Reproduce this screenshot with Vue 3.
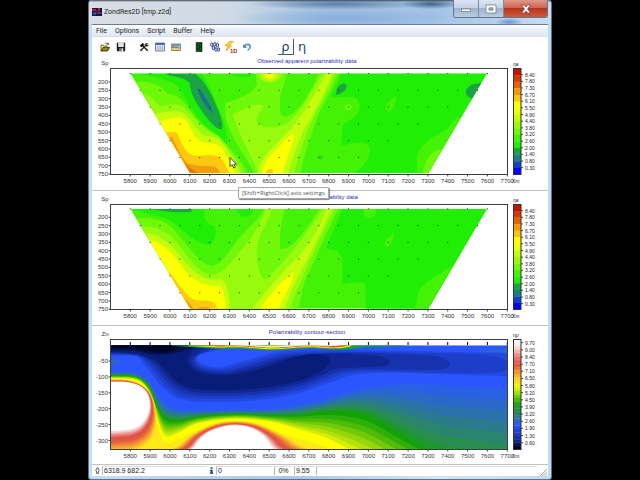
<script setup>
const X0 = 130.3
const STEP = 19.84
const xLabels = Array.from({ length: 20 }, (_, i) => ({ text: String(5800 + i * 100), x: X0 + i * STEP }))

/* ---------- curve helpers ---------- */
const mix = (a, b, t) => a + (b - a) * t
const mixPoints = (a, b, t) => a.map((p, i) => [mix(p[0], b[i][0], t), mix(p[1], b[i][1], t)])
const hex = (c) => [1, 3, 5].map((i) => parseInt(c.slice(i, i + 2), 16))
function ramp(stops, t) {
  const s = t * (stops.length - 1)
  const i = Math.min(Math.floor(s), stops.length - 2)
  const a = hex(stops[i])
  const b = hex(stops[i + 1])
  return `rgb(${a.map((v, k) => Math.round(mix(v, b[k], s - i))).join(',')})`
}
function curve(pts, closed) {
  const n = pts.length
  const at = (i) => (closed ? pts[(i + n) % n] : pts[Math.max(0, Math.min(n - 1, i))])
  let d = `M${pts[0].join(',')}`
  for (let i = 0; i < (closed ? n : n - 1); i++) {
    const [p, a, b, q] = [at(i - 1), at(i), at(i + 1), at(i + 2)]
    d += `C${a[0] + (b[0] - p[0]) / 6},${a[1] + (b[1] - p[1]) / 6} ${b[0] - (q[0] - a[0]) / 6},${b[1] - (q[1] - a[1]) / 6} ${b[0]},${b[1]}`
  }
  return d + (closed ? 'Z' : '')
}

/* ---------- pseudo-section palette ---------- */
const C = {
  blue: '#1c6f96', teal: '#1ba444', g2: '#20ee04', g3: '#44f206', g4: '#6ff808', g5: '#98fa0c',
  g6: '#c6fd0a', ye: '#ffff00', am: '#fdc810', or: '#f59c0c', dk: '#e2780f',
}

const observed = [
  [C.g3, 'M100,60H1220V380H100Z'],
  [C.g2, 'M768,71L755,105L738,135C745,150 790,136 810,144C830,152 828,180 812,198C790,222 770,212 772,240L768,290C790,280 840,272 853,290C860,320 840,345 808,371L1030,375L1215,71Z'],
  [C.g2, 'M150,71C200,76 230,85 258,96C290,108 300,150 328,188C352,222 385,252 424,284C434,262 420,220 405,185C388,140 370,100 350,71Z'],
  [C.g2, 'M440,71H505C495,85 455,86 440,71Z'],
  [C.g4, 'M150,96C200,92 225,104 248,132C285,130 305,168 330,200C352,228 378,240 402,258C440,300 474,335 490,375H300Z'],
  [C.g5, 'M178,132C205,140 212,162 228,168C260,160 290,160 300,176C330,200 350,238 400,260C440,305 462,335 478,375H300Z'],
  [C.g6, 'M205,192C245,186 270,178 296,190C322,212 340,252 364,258C395,258 412,272 430,305C452,335 460,350 466,375H300Z'],
  [C.ye, 'M225,216C250,204 285,196 302,210C320,240 334,274 362,280C395,275 412,292 424,318C440,345 446,360 454,375H300Z'],
  [C.am, 'M236,247H275C288,275 298,305 322,316C345,320 372,312 396,318C420,328 418,346 438,375H300Z'],
  [C.or, 'M246,262H262C276,290 290,330 312,342C340,350 370,346 388,350C402,356 402,364 408,375H300Z'],
  [C.dk, 'M284,326C298,336 308,352 330,362L346,375H300Z'],
  [C.g4, 'M422,158C450,150 500,136 515,104L512,71H602C606,98 585,120 585,150C582,185 588,202 606,200C650,180 680,120 700,71H760C742,112 722,150 702,190C682,240 668,290 655,330L645,375H512C490,330 455,290 432,235C420,205 420,180 422,158Z'],
  [C.g5, 'M444,194C480,172 520,156 536,168C528,188 512,195 515,215C530,238 580,238 612,215C650,180 682,120 712,71H750C732,120 700,170 682,210C660,260 642,310 626,375H520C505,320 462,262 444,194Z'],
  [C.g5, 'M520,71H592C586,106 524,108 520,71Z'],
  [C.g6, 'M528,71H582C578,98 532,100 528,71Z'],
  [C.ye, 'M537,71H570C566,90 540,90 537,71Z'],
  [C.g6, 'M520,375C518,330 558,298 600,252C640,222 690,130 724,71H742C715,140 680,200 656,240C640,280 620,330 608,375Z'],
  [C.ye, 'M532,375C532,345 548,318 578,296C600,270 615,250 627,252C625,290 600,330 592,375Z'],
  [C.am, 'M540,375C542,362 556,352 562,358C566,366 562,370 562,375Z'],
  [C.g4, 'M778,172C780,162 796,160 800,170C800,182 782,186 778,172Z'],
  [C.g3, 'M903,178C898,160 915,158 931,136C936,158 924,182 910,186Z'],
  [C.g3, 'M1125,203C1105,200 1100,228 1088,236C1060,256 1032,262 1010,292C985,318 1000,340 994,375H1030L1140,203Z'],
  [C.g4, 'M1062,298C1040,306 1016,330 1014,375H1030L1070,298Z'],
  [C.teal, 'M240,71H332C350,88 368,108 385,146C400,182 417,215 411,238C396,242 368,208 350,182C325,145 318,130 314,98C290,76 260,82 240,71Z'],
  [C.blue, 'M335,110C352,125 378,165 384,190C364,176 344,142 335,110Z'],
  [C.teal, 'M752,135L757,115C765,98 785,96 785,108C782,124 768,132 752,135Z'],
  [C.teal, 'M1142,125C1145,106 1170,97 1192,100L1162,148C1150,140 1142,135 1142,125Z'],
  [C.teal, 'M700,322C702,312 714,314 714,322C712,332 702,330 700,322Z', 0.35],
]

const calculated = [
  [C.g3, 'M100,60H1220V380H100Z'],
  [C.g2, 'M772,71L722,190C755,190 770,202 772,230V297C790,292 830,288 838,294C844,310 840,345 842,375H1030L1215,71Z'],
  [C.g2, 'M145,71C190,92 245,90 272,118C310,150 350,184 378,178C394,160 396,130 388,122C362,116 350,92 362,71Z'],
  [C.g2, 'M452,71H505C500,100 466,104 452,71Z'],
  [C.g4, 'M145,100C190,96 230,98 262,128C318,190 345,236 380,242C412,238 430,196 470,150C500,115 528,100 536,71H600C588,112 582,160 586,190C622,200 680,110 702,71H760C720,150 690,220 672,262C652,290 650,330 640,375H300Z'],
  [C.g5, 'M168,124C215,118 258,146 286,184C322,234 350,270 385,268C424,258 446,220 478,182C508,150 528,110 545,71H562C550,110 515,150 515,200C515,250 532,290 545,280C600,230 670,140 714,71H748C710,150 672,230 652,280C632,320 622,345 614,375H300Z'],
  [C.g6, 'M182,142C228,146 268,184 298,226C328,268 368,288 398,282C424,272 432,320 436,375H300Z'],
  [C.ye, 'M194,163C235,172 266,206 296,250C326,288 365,304 404,302C420,312 418,348 426,375H300Z'],
  [C.g6, 'M498,375C540,320 600,250 640,215C672,180 702,130 726,71H738C700,160 662,230 642,270C622,310 608,340 600,375Z'],
  [C.ye, 'M524,375C550,330 590,290 626,258C628,292 594,330 580,375Z'],
  [C.am, 'M240,248C272,276 296,330 330,344C360,350 394,336 397,375H300Z'],
  [C.or, 'M268,290C284,318 296,340 310,350L330,375H300ZM326,375C340,362 378,362 380,375Z'],
  [C.g3, 'M835,71H872C880,106 832,108 835,71Z'],
  [C.g3, 'M900,180C896,160 912,160 926,142C928,158 918,184 906,186Z'],
  [C.g3, 'M1100,243C1060,270 1006,292 998,330L990,375H1030L1120,243Z'],
  [C.teal, 'M190,71C240,77 270,84 320,80V71Z'],
]

/* ---------- inversion section ---------- */
const xs = [77, 140, 172, 196, 214, 240, 285, 340, 450, 560, 640, 720, 790, 855, 955, 1050, 1150, 1267]
const lineA = [156, 158, 170, 190, 220, 252, 268, 270, 270, 266, 256, 238, 215, 202, 192, 195, 200, 205]
const lineB = [167, 168, 180, 208, 252, 292, 300, 290, 282, 286, 284, 274, 274, 288, 344, 396, 420, 440]
const lineC = [175, 177, 190, 224, 284, 348, 336, 310, 296, 306, 328, 352, 386, 420, 470, 490, 500, 520]
const line = (ys) => xs.map((x, i) => [x, ys[i]])
function bands(a, b, stops, steps) {
  return Array.from({ length: steps }, (_, i) => {
    const t = i / steps
    return [ramp(stops, t), curve(mixPoints(line(a), line(b), t), false) + 'V400H77Z']
  })
}
function rings(outer, inner, stops, steps) {
  return Array.from({ length: steps + 1 }, (_, i) => [
    ramp(stops, i / steps),
    curve(mixPoints(outer, inner, i / steps), true),
  ])
}
const navyOuter = [[60, 60], [60, 104], [150, 108], [184, 142], [240, 208], [310, 242], [500, 242], [640, 220], [740, 186], [880, 158], [1400, 168], [1400, 108], [1075, 95], [900, 92], [620, 92], [480, 122], [400, 142], [342, 126], [350, 98], [420, 84], [440, 60]]
const navyInner = [[60, 60], [60, 92], [160, 102], [225, 132], [272, 182], [340, 208], [500, 207], [640, 182], [700, 158], [722, 142], [735, 127], [732, 114], [715, 104], [660, 104], [600, 120], [540, 142], [440, 165], [345, 158], [308, 128], [320, 98], [345, 60]]
const blobLeftOut = [[20, 178], [77, 178], [124, 180], [168, 194], [198, 224], [212, 266], [214, 316], [198, 362], [150, 396], [77, 402], [20, 402]]
const blobLeftIn = [[20, 186], [77, 186], [124, 187], [160, 196], [184, 216], [194, 246], [190, 280], [170, 312], [138, 328], [77, 334], [20, 334]]
const blobMidOut = [[235, 424], [282, 374], [325, 340], [385, 312], [450, 303], [520, 312], [585, 340], [640, 370], [700, 424]]
const blobMidIn = [[312, 424], [332, 374], [362, 342], [405, 323], [450, 316], [495, 323], [530, 342], [556, 374], [576, 424]]
const hot = ['#ffe818', '#fbb82c', '#f08a34', '#e25c40', '#df5248', '#eda29c', '#ffffff']
const section = [
  ['#2a55ff', 'M77,76H1267V387H77Z'],
  ['#2d66cc', 'M1185,96C1210,88 1240,92 1267,84V106C1240,108 1210,106 1185,96Z'],
  ...rings(navyOuter, navyInner, ['#2248e0', '#1a3bc0', '#12299a', '#081d78'], 4),
  ['#040f48', 'M77,60H350C345,84 310,86 290,94C250,108 200,106 160,94C130,88 110,92 77,90Z'],
  ['#000424', 'M190,76H300C275,82 265,96 240,98C210,98 190,88 140,86L77,84V76Z'],
  ['#2d6ab0', 'M77,120C88,116 104,120 104,125C100,130 88,130 77,129Z'],
  ...bands(lineA, lineB, ['#2a60e4', '#2a70b4', '#2c7f7c', '#28904a', '#10a00c'], 7),
  ...bands(lineB, lineC, ['#12a206', '#44b808', '#84d008', '#bce40c', '#f4fa04'], 7),
  ['#ffff00', curve(line(lineC), false) + 'V400H77Z'],
  ['#ffe818', curve(line(lineC.map((y, i) => y + 8 + i * 2)), false) + 'V400H77Z'],
  ...rings(blobLeftOut, blobLeftIn, hot, 12),
  ...rings(blobMidOut, blobMidIn, hot, 12),
  ['#18a030', 'M260,76H975C930,82 850,78 815,84C770,92 740,88 690,84C640,82 600,92 555,91C510,90 480,84 430,86C370,86 320,80 260,77Z'],
  ['#e8f010', 'M310,76H805C780,88 740,86 690,82C640,79 600,89 558,88C510,86 480,80 430,82C380,83 350,78 310,77Z'],
  ['#e85030', 'M345,76H480C520,78 540,83 560,83C590,83 610,76 650,76H790C765,84 735,84 700,79C640,76 600,86 558,85C510,83 480,78 430,79C390,80 370,77 345,77Z'],
  ['#ffffff', 'M420,74H490C530,79 545,80 560,80C590,80 600,75 650,74H780C750,80 725,79 700,77C640,75 610,83 558,82C510,80 480,77 420,76Z'],
]

/* ---------- sounding points ---------- */
const points = Array.from({ length: 6 }, (_, r) =>
  Array.from({ length: 19 - r * 2 + (r > 0 ? 1 : 0) }, (_, k) => ({ x: X0 + r * 9.92 + k * STEP, y: 73.5 + r * 16.8 })),
).flat().filter((p) => (p.y - 73.5) * 0.594 + p.x < 488)

const pseudoScale = ['#c81000', '#d63a04', '#e26408', '#f29a08', '#fbc70c', '#ffff00', '#eaff08', '#c6fd0a', '#98fa0c', '#6ff808', '#44f206', '#20ee04', '#1ba444', '#188080', '#0c46c0', '#0000ff']
const sectionStops = ['#ffffff', '#f4d0cc', '#e88078', '#e05040', '#f09030', '#fbd020', '#f0f804', '#90d408', '#28aa08', '#229040', '#2a7a90', '#2a55ff', '#1c40d0', '#102890', '#000424']
const sectionScale = Array.from({ length: 32 }, (_, i) => ramp(sectionStops, i / 31))
const pseudoLabels = ['8.40', '7.80', '7.30', '6.70', '6.10', '5.50', '4.90', '4.40', '3.80', '3.20', '2.60', '2.00', '1.40', '0.80', '0.30']
const sectionLabels = ['9.70', '9.00', '8.40', '7.70', '7.10', '6.50', '5.80', '5.20', '4.50', '3.90', '3.20', '2.60', '1.90', '1.30', '0.60']
const depthTicks = Array.from({ length: 12 }, (_, i) => ({ text: String(200 + i * 50), y: 82 + i * 8.36 }))

const trapezoid = 'M136,70H1206L1030,370H316Z'
const charts = [
  {
    id: 'observed', title: 'Observed apparent polarizability data', axis: 'Sp', unit: 'ηa',
    view: '92 57 456 133', top: 68.5, bottom: 174.5, origin: 50, layers: observed, clip: trapezoid,
    yTicks: depthTicks, points, scale: pseudoScale, labels: pseudoLabels, firstLabel: 6.2, labelStep: 6.64, pointer: true,
  },
  {
    id: 'calculated', title: 'Calculated apparent polarizability data', axis: 'Sp', unit: 'ηa',
    view: '92 191 456 134', top: 204.5, bottom: 309.5, origin: 185.3, layers: calculated, clip: trapezoid,
    yTicks: depthTicks.map((t) => ({ text: t.text, y: t.y + 135.3 })), points: points.map((p) => ({ x: p.x, y: p.y + 135.3 })),
    scale: pseudoScale, labels: pseudoLabels, firstLabel: 6.2, labelStep: 6.64, tip: '[Shift+RightClick] axis settings',
  },
  {
    id: 'section', title: 'Polarizability contour-section', axis: 'Zn', unit: 'ηρ',
    view: '92 326 456 138', top: 339.5, bottom: 449.5, origin: 320, layers: section, clip: 'M77,76H1267V387H77Z',
    yTicks: [-50, -100, -150, -200, -250, -300].map((v, i) => ({ text: String(v), y: 361 + i * 15.9 })), points: [],
    scale: sectionScale, labels: sectionLabels, firstLabel: 3.2, labelStep: 7.14, stations: true,
  },
]
const menus = ['File', 'Options', 'Script', 'Buffer', 'Help']
</script>

<template>
  <div class="desktop">
    <main class="window">
      <header class="titlebar">
        <svg class="app-icon" viewBox="0 0 10 8" aria-hidden="true">
          <path d="M0 0H10V8H0Z" fill="#17172e" />
          <path d="M0 1H4V3H0ZM6 0H8V3H6Z" fill="#b02a3c" />
          <path d="M1 4H4V7H1ZM6 4H9V6H6Z" fill="#3146b4" />
          <path d="M4 2H6V6H4Z" fill="#5c1030" />
        </svg>
        <h1>ZondRes2D [tmp.z2d]</h1>
        <div class="controls">
          <button type="button" class="ctl" aria-label="Minimize">
            <svg viewBox="0 0 12 10"><rect x="1.5" y="5" width="9" height="2.5" fill="#fff" stroke="#666b74" stroke-width=".7" /></svg>
          </button>
          <button type="button" class="ctl" aria-label="Maximize">
            <svg viewBox="0 0 12 10"><path d="M1 1H11V9H1ZM4 3.8V6.2H8V3.8Z" fill="#fff" fill-rule="evenodd" stroke="#666b74" stroke-width=".7" /></svg>
          </button>
          <button type="button" class="ctl close" aria-label="Close">
            <svg viewBox="0 0 12 10"><path d="M1.5 1H4.5L6 3L7.5 1H10.5L7.6 5L10.5 9H7.5L6 7L4.5 9H1.5L4.4 5Z" fill="#fff" stroke="#6b3a3a" stroke-width=".7" /></svg>
          </button>
        </div>
      </header>

      <div class="client">
        <nav class="menu">
          <button v-for="m in menus" :key="m" type="button">{{ m }}</button>
        </nav>

        <div class="toolbar">
          <div class="group">
            <button type="button" aria-label="Open">
              <svg viewBox="0 0 10 10"><path d="M1 9V3H3L4 4H7V5" fill="#f2ee70" stroke="#55550c" stroke-width=".8" /><path d="M1 9L3 5.4H9.6L7.6 9Z" fill="#8d8b16" stroke="#1f1f06" stroke-width=".8" /><path d="M5 2C6 .8 7.500 .8 8.300 2.200M8.500 .8V2.600H6.800" fill="none" stroke="#222" stroke-width=".7" /></svg>
            </button>
            <button type="button" aria-label="Save">
              <svg viewBox="0 0 10 10"><path d="M.8 .8H9.200V9.200H1.600L.8 8.400Z" fill="#1c1c1c" /><path d="M2.200 .8H7.800V5H2.200Z" fill="#e4e4e4" /><path d="M3 6.200H7.400V9H3Z" fill="#777" /><path d="M5.700 6.600H6.900V9H5.700Z" fill="#fff" /></svg>
            </button>
          </div>
          <div class="group">
            <button type="button" aria-label="Tools">
              <svg viewBox="0 0 10 10"><path d="M.8 3.400L3.500 1L5.600 2.600L4.500 3.600L9.200 8.200L8.200 9.200L3.600 4.500L2.200 5.200Z" fill="#111" /><path d="M9 1L7.500 2.600L8 3L9.600 2.200C9.700 4.200 8 5 6.600 4.200L2 9.400L.8 8.200L5.800 3.500C5.400 2 7 .500 9 1Z" fill="#2a2a14" /></svg>
            </button>
            <button type="button" aria-label="Table">
              <svg viewBox="0 0 10 10"><path d="M.5 1H9.500V9H.5Z" fill="#fff" stroke="#54617c" stroke-width=".8" /><path d="M.5 1H9.500V3H.5Z" fill="#4868bc" /><path d="M.5 5H9.500M.5 7H9.500M3 3V9M5.200 3V9M7.400 3V9" stroke="#8391ac" stroke-width=".6" /></svg>
            </button>
            <button type="button" aria-label="Colour map">
              <svg viewBox="0 0 10 10"><path d="M.3 2H9.700V8.400H.3Z" fill="#fff" stroke="#444" stroke-width=".7" /><path d="M.7 2.300H9.300V4.500H.7Z" fill="#4c9bc8" /><path d="M.7 4.500H5L9.300 5.500V6.500H.7Z" fill="#d8583c" /><path d="M.7 6.300L4 5.800L9.300 7.200V8H.7Z" fill="#d4d07c" /></svg>
            </button>
          </div>
          <div class="group">
            <button type="button" aria-label="Layer model">
              <svg viewBox="0 0 10 10"><path d="M2.200 .5H8V9.600H2.200Z" fill="#04420c" stroke="#111" stroke-width=".6" /><path d="M4 2H5M6 3.500H7M3.500 5H5M6 6.500H7M4 8H5" stroke="#2c8a30" stroke-width=".7" /></svg>
            </button>
            <button type="button" aria-label="Inversion options">
              <svg viewBox="0 0 10 10" fill="#e8f0ff" stroke="#1c2c84" stroke-width=".9"><ellipse cx="1.800" cy="2.600" rx="1.200" ry="1.800" /><ellipse cx="4.800" cy="2.400" rx="1.200" ry="1.800" /><ellipse cx="3.400" cy="6" rx="1.200" ry="1.800" /><ellipse cx="7.400" cy="3" rx="1.200" ry="1.800" /><ellipse cx="6" cy="7.400" rx="1.200" ry="1.800" /><ellipse cx="8.700" cy="7.400" rx="1" ry="1.800" /></svg>
            </button>
            <button type="button" aria-label="Run inversion">
              <svg class="large" viewBox="0 0 12 12"><path d="M5 0L0 4.500L3 5L1 10L6.500 5L4.500 4.300L8.500 0Z" fill="#ffd21c" stroke="#d68a10" stroke-width=".6" /><text x="5" y="11.500" class="icon-text">1D</text></svg>
            </button>
            <button type="button" aria-label="Undo">
              <svg viewBox="0 0 10 10"><path d="M2.500 4C4 1.800 8.400 1.600 8.200 5C8 6.800 6.800 7.800 5.600 8.400" fill="none" stroke="#5a92cc" stroke-width="1.600" /><path d="M1.200 2V5.800H5Z" fill="#3a76ba" /></svg>
            </button>
          </div>
          <div class="group greek">
            <button type="button" class="pressed">ρ</button>
            <button type="button">η</button>
          </div>
        </div>

        <section v-for="c in charts" :key="c.id" class="panel">
          <svg class="chart" :viewBox="c.view" role="img" :aria-label="c.title">
            <defs>
              <clipPath :id="'clip-' + c.id"><path :d="c.clip" /></clipPath>
            </defs>
            <text class="title" x="307" :y="c.top - 6" text-anchor="middle">{{ c.title }}</text>
            <text class="tick" x="108.500" :y="c.top - 3.500" text-anchor="end">{{ c.axis }}</text>

            <g :transform="`translate(85 ${c.origin}) scale(${1 / 3})`">
              <g :clip-path="`url(#clip-${c.id})`">
                <path v-for="(l, i) in c.layers" :key="i" :fill="l[0]" :d="l[1]" :fill-opacity="l[2] ?? 1" />
              </g>
            </g>
            <rect v-for="(p, i) in c.points" :key="'p' + i" class="point" :x="p.x - 0.500" :y="p.y - 0.500" width="1" height="1" />
            <template v-if="c.stations">
              <path v-for="l in xLabels" :key="'s' + l.x" class="station" :d="`M${l.x},${c.top + 2.500}V${c.top + 5.500}`" />
            </template>

            <rect class="frame" x="110.500" :y="c.top" width="397" :height="c.bottom - c.top" />
            <g v-for="l in xLabels" :key="l.text">
              <path class="tickmark" :d="`M${l.x},${c.bottom}v2`" />
              <text class="tick" :x="l.x" :y="c.bottom + 8" text-anchor="middle">{{ l.text }}</text>
            </g>
            <text class="scale-text" x="512" :y="c.bottom + 8">Xm</text>
            <g v-for="t in c.yTicks" :key="t.text">
              <path class="tickmark" :d="`M108.500,${t.y}h2`" />
              <text class="tick" x="108" :y="t.y + 2" text-anchor="end">{{ t.text }}</text>
            </g>

            <text class="scale-text" x="513" :y="c.top - 2.500">{{ c.unit }}</text>
            <rect
              v-for="(col, i) in c.scale" :key="'c' + i" x="513.500" width="7.500" :fill="col"
              :y="c.top + (i * (c.bottom - c.top)) / c.scale.length" :height="(c.bottom - c.top) / c.scale.length + 0.200"
            />
            <rect class="scale-frame" x="513.500" :y="c.top" width="7.500" :height="c.bottom - c.top" />
            <g v-for="(t, i) in c.labels" :key="'l' + i">
              <path class="tickmark" :d="`M521,${c.top + c.firstLabel + i * c.labelStep}h2`" />
              <text class="scale-text" x="525" :y="c.top + c.firstLabel + i * c.labelStep + 2">{{ t }}</text>
            </g>

            <path v-if="c.pointer" class="pointer" d="M230,157.500V166.500L232.200,164.600L233.700,168L235.300,167.200L233.800,164.200H236.500Z" />
          </svg>
          <div v-if="c.tip" class="tip" role="tooltip">{{ c.tip }}</div>
        </section>

        <footer class="status">
          <svg class="mark" viewBox="0 0 6 8"><path d="M3 .5L5 3.500L4 6V7.500H2V6L1 3.500Z" fill="#fff" stroke="#222" stroke-width=".9" /></svg>
          <span class="cell coords">6318.9 682.2</span>
          <svg class="mark info" viewBox="0 0 6 8"><path d="M2 0H4.300V2H2ZM1.200 3H4.300V6.500H5V8H1V6.500H2V4.300H1.200Z" fill="#1530a0" /></svg>
          <span class="cell count">0</span>
          <span class="cell percent">0%</span>
          <span class="cell value">9.55</span>
          <span class="cell rest"></span>
          <svg class="grip" viewBox="0 0 8 8"><path d="M1 8L8 1M3.500 8L8 3.500M6 8L8 6" stroke="#999" stroke-width=".9" /></svg>
        </footer>
      </div>
    </main>
  </div>
</template>

<style>
body {
  background: #000;
}
</style>

<style scoped>
.desktop {
  min-height: 100vh;
  background: #000;
  font-family: Roboto, "Noto Sans", sans-serif;
}
.window {
  box-sizing: border-box;
  width: 72.5%;
  margin: 0 auto;
  padding: 0 3px 3px;
  border: 1px solid #5d7288;
  border-top: 0;
  border-radius: 4px 4px 3px 3px;
  background: linear-gradient(90deg, #c5dcf4, #a9c8ea 45%, #d2e3f5 75%, #bcdcf4);
}
.titlebar {
  display: flex;
  align-items: center;
  gap: 2px;
  height: 24px;
  margin: 0 -3px;
  padding: 0 3px;
  border-radius: 4px 4px 0 0;
  background:
    linear-gradient(180deg, #3c4650 0, #3c465000 2px),
    radial-gradient(ellipse 30px 5px at 74% 4px, #3f5f86 0, #3f5f8600 100%),
    radial-gradient(ellipse 90px 6px at 54% 4px, #5c7da6 0, #5c7da600 100%),
    radial-gradient(ellipse 110px 10px at 55% 18px, #86aeda 0, #86aeda00 100%),
    radial-gradient(ellipse 14px 4px at 91% 22px, #5e96d8 0, #5e96d800 100%),
    linear-gradient(90deg, #d9dee5, #d0dae6 30%, #a7c4e4 50%, #a3c3e6 75%, #c9dcf0);
}
.app-icon {
  width: 10px;
  height: 8px;
}
h1 {
  flex: 1;
  margin: 0;
  font-size: 7px;
  font-weight: 400;
  line-height: 10px;
  color: #1b1f26;
}
.controls {
  display: flex;
  align-self: flex-start;
  height: 18px;
  overflow: hidden;
  border: 1px solid #62758c;
  border-top: 0;
  border-radius: 0 0 3px 3px;
  box-sizing: border-box;
}
.ctl {
  display: grid;
  place-items: center;
  width: 25px;
  padding: 0;
  border: 0;
  border-right: 1px solid #7c8da2;
  background: linear-gradient(#dbe6f2, #c4d3e4 45%, #9eb4cd 50%, #b9cde2);
}
.ctl svg {
  width: 12px;
  height: 10px;
}
.close {
  width: 43px;
  border-right: 0;
  background: linear-gradient(#dd9a88, #cd6650 45%, #b93420 50%, #cc5a3a);
}
.client {
  border-top: 1px solid #6d7a89;
  background: #fff;
}
.menu {
  display: flex;
  align-items: center;
  gap: 8px;
  height: 12px;
  padding: 0 4px;
  background: linear-gradient(#fff, #e9eff8 40%, #e4ebf5 80%, #d6dde6);
}
.menu button {
  padding: 0;
  border: 0;
  background: none;
  font-family: inherit;
  font-size: 7px;
  line-height: 10px;
  color: #222;
}
.toolbar {
  display: flex;
  align-items: center;
  height: 20px;
  padding: 0 5px;
}
.group {
  display: flex;
  margin-right: 7px;
}
.toolbar button {
  display: grid;
  place-items: center;
  width: 16px;
  height: 16px;
  padding: 0;
  border: 0;
  background: none;
}
.toolbar svg {
  width: 10px;
  height: 10px;
}
.toolbar .large {
  width: 12px;
  height: 12px;
}
.icon-text {
  font-family: "Liberation Sans", sans-serif;
  font-size: 6px;
  font-weight: 700;
  fill: #a82a20;
}
.greek {
  margin-left: 16px;
}
.greek button {
  font-family: "DejaVu Sans", sans-serif;
  font-size: 13px;
  line-height: 14px;
  color: #2c3c7c;
}
.greek .pressed {
  border-right: 1px solid #556;
  border-bottom: 1px solid #556;
}
.panel {
  position: relative;
  border-bottom: 1px solid #c2c2c2;
}
.chart {
  display: block;
  width: 100%;
  height: auto;
  font-family: "Liberation Sans", sans-serif;
}
.title {
  font-size: 6px;
  fill: #2c2cb4;
}
.tick {
  font-size: 6px;
  fill: #333;
}
.scale-text {
  font-size: 5px;
  fill: #222;
}
.tickmark {
  stroke: #444;
  stroke-width: 1;
}
.frame {
  fill: none;
  stroke: #3c3c3c;
}
.scale-frame {
  fill: none;
  stroke: #333;
  stroke-width: 1;
}
.station {
  stroke: #000;
  stroke-width: 1;
}
.point {
  fill: #0c3c0c;
}
.pointer {
  fill: #fff;
  stroke: #222;
  stroke-width: 0.8;
}
.tip {
  position: absolute;
  top: -4px;
  left: 32%;
  padding: 0 3px;
  border: 1px solid #a8a8a8;
  border-radius: 1px;
  background: #fdfdfd;
  box-shadow: 1px 1px 1px #888;
  font-family: "Open Sans", "Noto Sans", sans-serif;
  font-size: 6px;
  line-height: 10px;
  white-space: nowrap;
  color: #555;
}
.status {
  display: flex;
  align-items: center;
  gap: 2px;
  height: 11px;
  padding: 0 1px 0 3px;
  font-family: "Liberation Sans", sans-serif;
  font-size: 7px;
  line-height: 9px;
  color: #222;
}
.mark {
  width: 5px;
  height: 7px;
}
.cell {
  box-sizing: border-box;
  height: 9px;
  padding: 0 1px;
  border-left: 1px solid #b8b8b8;
  border-top: 1px solid #dedede;
  line-height: 8px;
}
.coords {
  width: 105px;
}
.count {
  width: 56px;
}
.percent {
  width: 18px;
  text-align: center;
}
.value {
  width: 20px;
}
.rest {
  flex: 1;
}
.grip {
  align-self: flex-end;
  width: 8px;
  height: 8px;
}
</style>
